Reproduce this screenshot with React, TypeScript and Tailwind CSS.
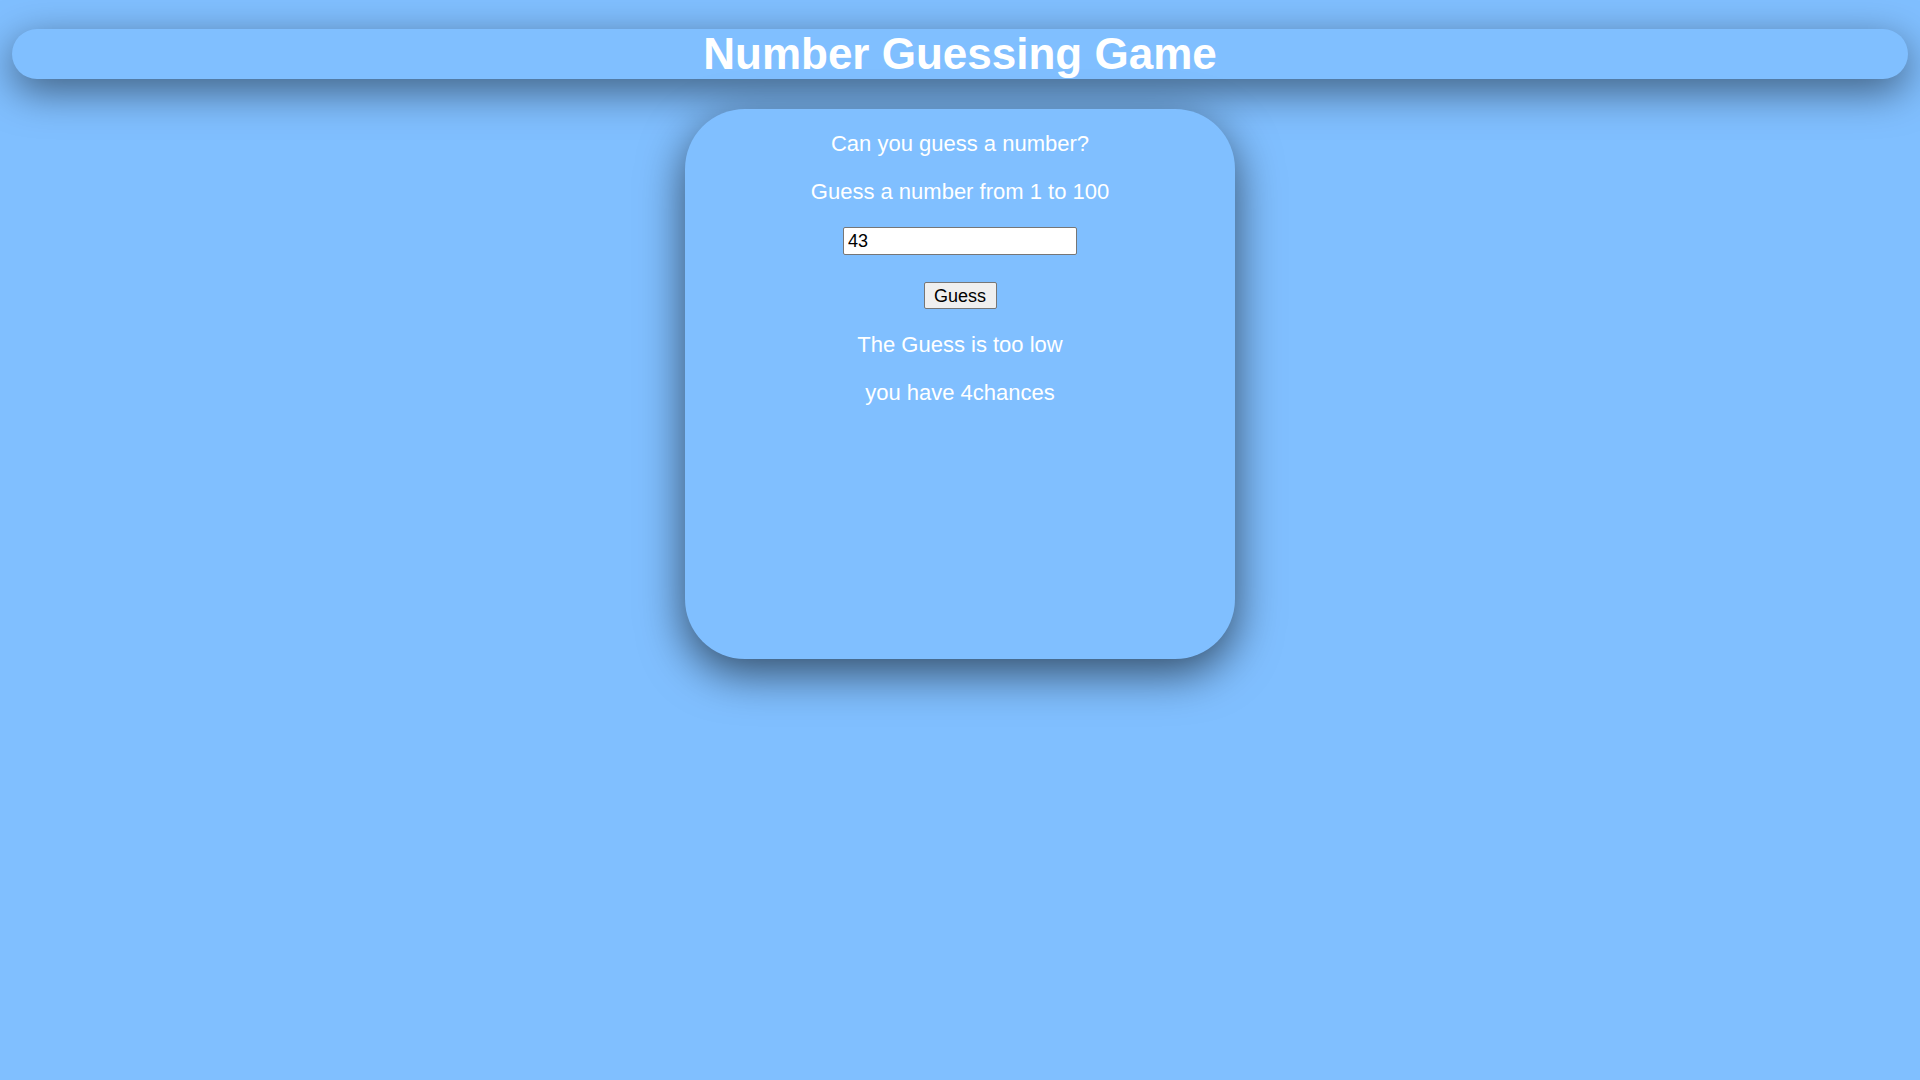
import React, { useState } from "react";

export default function App() {
  const [value, setValue] = useState("43");
  return (
    <div
      className="min-h-screen w-full bg-[#80bfff] pt-[29px] px-[12px]"
      style={{ fontFamily: '"Liberation Sans", Arial, sans-serif' }}
    >
      <header className="h-[50px] rounded-[25px] bg-[#80bfff] shadow-[0_12px_40px_rgba(0,0,0,0.5)] flex items-center justify-center">
        <h1 className="text-[44px] font-bold text-white leading-none">Number Guessing Game</h1>
      </header>
      <div className="mx-auto mt-[30px] w-[550px] h-[550px] rounded-[60px] bg-[#80bfff] shadow-[0_14px_45px_rgba(0,0,0,0.6)] flex flex-col items-center pt-[22px]">
        <p className="text-[22px] leading-[25px] text-white">Can you guess a number?</p>
        <p className="mt-[23px] text-[22px] leading-[25px] text-white">Guess a number from 1 to 100</p>
        <input
          type="text"
          value={value}
          onChange={(e) => setValue(e.target.value)}
          className="mt-[23px] w-[234px] h-[28px] bg-white border border-[#767676] rounded-[2px] px-[4px] text-[18px] text-black outline-none"
        />
        <button className="mt-[27px] w-[73px] h-[27px] bg-[#efefef] border border-[#767676] rounded-[2px] text-[18px] text-black leading-none">
          Guess
        </button>
        <p className="mt-[23px] text-[22px] leading-[25px] text-white">The Guess is too low</p>
        <p className="mt-[23px] text-[22px] leading-[25px] text-white">you have 4chances</p>
      </div>
    </div>
  );
}
